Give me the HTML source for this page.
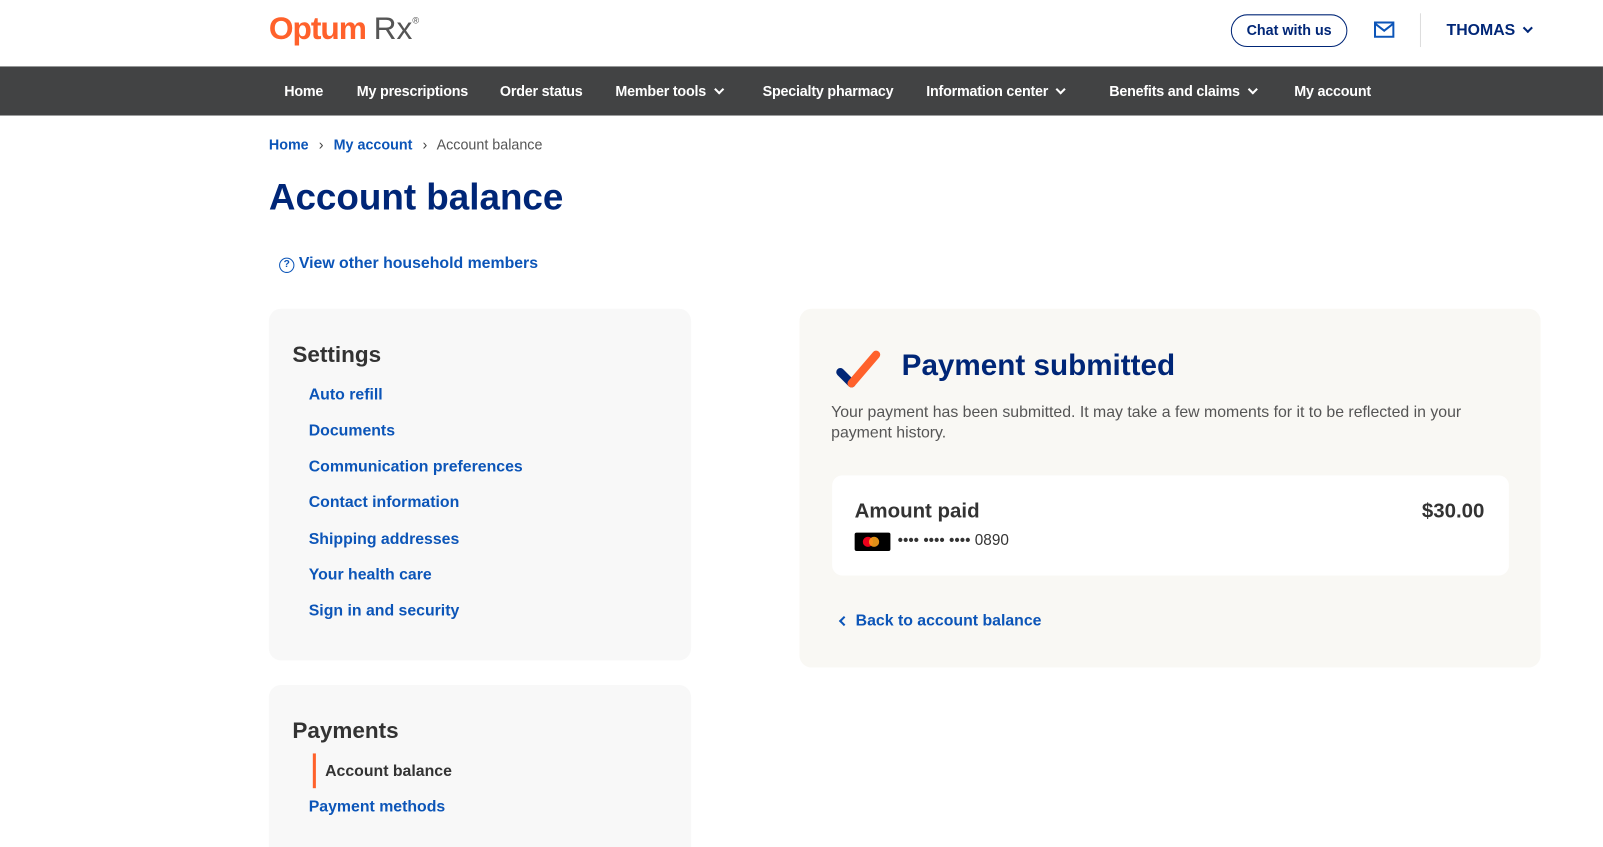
<!DOCTYPE html>
<html><head><meta charset="utf-8"><style>
*{box-sizing:border-box;margin:0;padding:0}
html{overflow:hidden;height:847px}
body{width:1603px;height:847px;overflow:hidden;background:#fff;font-family:"Liberation Sans",sans-serif;color:#333;position:relative}
#w{position:absolute;left:0;top:0;width:1568px;height:829px;overflow:hidden;transform:scale(1.0223);transform-origin:0 0}
.a{position:absolute}
a,.lk{color:#0c55b8;font-weight:bold;text-decoration:none}
.nav{top:65px;left:0;width:1568px;height:48px;background:#424344}
.nav span{position:absolute;top:16px;color:#fff;font-size:14px;font-weight:bold;white-space:nowrap;letter-spacing:-0.2px}
.chev{display:inline-block;width:7px;height:7px;border-right:2px solid currentColor;border-bottom:2px solid currentColor;transform:rotate(45deg);margin-left:9px;position:relative;top:-3px}
.card{background:#f8f8f8;border-radius:12px}
.side a{position:absolute;left:39px;font-size:15.5px}
</style></head><body><div id="w">
<div class="a" style="left:263px;top:10px;font-size:31px;font-weight:bold;color:#ff612b;letter-spacing:-1px">Optum <span style="font-weight:normal;color:#555;letter-spacing:0">Rx</span><sup style="font-size:9px;color:#555;font-weight:normal;position:relative;top:-4px">®</sup></div>
<div class="a" style="left:1204px;top:14px;width:114px;height:32px;border:1.5px solid #002677;border-radius:16px;color:#002677;font-weight:bold;font-size:14px;text-align:center;line-height:29px">Chat with us</div>
<svg class="a" style="left:1344px;top:21px" width="20" height="16" viewBox="0 0 20 16"><rect x="1" y="1" width="18" height="14" fill="none" stroke="#0c55b8" stroke-width="2"/><path d="M1 2l9 7 9-7" fill="none" stroke="#0c55b8" stroke-width="2"/></svg>
<div class="a" style="left:1389px;top:13px;width:1px;height:33px;background:#ddd"></div>
<div class="a" style="left:1415px;top:21px;font-size:15.5px;font-weight:bold;color:#002677">THOMAS<span class="chev"></span></div>
<div class="a nav">
<span style="left:278px">Home</span><span style="left:349px">My prescriptions</span><span style="left:489px">Order status</span><span style="left:602px">Member tools<i class="chev"></i></span><span style="left:746px">Specialty pharmacy</span><span style="left:906px">Information center<i class="chev"></i></span><span style="left:1085px">Benefits and claims<i class="chev"></i></span><span style="left:1266px">My account</span>
</div>
<div class="a" style="left:263px;top:133px;font-size:14px"><a>Home</a> <span style="color:#444;margin:0 6px">›</span> <a>My account</a> <span style="color:#444;margin:0 6px">›</span> <span style="color:#555">Account balance</span></div>
<div class="a" style="left:263px;top:172px;font-size:36px;font-weight:bold;color:#002677">Account balance</div>
<div class="a lk" style="left:273px;top:249px;font-size:15.5px"><span style="display:inline-block;width:15px;height:15px;border:1.5px solid #0c55b8;border-radius:50%;font-size:10px;text-align:center;line-height:12px;vertical-align:1px">?</span> View other household members</div>
<div class="a card side" style="left:263px;top:302px;width:413px;height:344px">
<div class="a" style="left:23px;top:32px;font-size:22px;font-weight:bold;color:#333">Settings</div>
<a style="top:76px">Auto refill</a><a style="top:111px">Documents</a><a style="top:146px">Communication preferences</a><a style="top:181px">Contact information</a><a style="top:217px">Shipping addresses</a><a style="top:252px">Your health care</a><a style="top:287px">Sign in and security</a>
</div>
<div class="a card side" style="left:263px;top:670px;width:413px;height:200px">
<div class="a" style="left:23px;top:32px;font-size:22px;font-weight:bold;color:#333">Payments</div>
<div class="a" style="left:43px;top:67px;width:3px;height:34px;background:#ff612b"></div>
<div class="a" style="left:55px;top:76px;font-size:15.5px;font-weight:bold;color:#333">Account balance</div>
<a style="top:111px">Payment methods</a>
</div>
<div class="a card" style="left:782px;top:302px;width:725px;height:351px;background:#f9f8f4">
<svg class="a" style="left:35px;top:38px" width="46" height="40" viewBox="0 0 46 40"><path d="M5 24l11 11" stroke="#002677" stroke-width="8" stroke-linecap="round"/><path d="M16 35L40 7" stroke="#ff612b" stroke-width="8" stroke-linecap="round"/></svg>
<div class="a" style="left:100px;top:40px;font-size:29px;font-weight:bold;color:#002677">Payment submitted</div>
<div class="a" style="left:31px;top:92px;width:680px;font-size:15.5px;line-height:20px;color:#555">Your payment has been submitted. It may take a few moments for it to be reflected in your payment history.</div>
<div class="a" style="left:32px;top:163px;width:662px;height:98px;background:#fff;border-radius:10px">
<div class="a" style="left:22px;top:24px;font-size:20px;font-weight:bold;color:#333">Amount paid</div>
<div class="a" style="right:24px;top:24px;font-size:20px;font-weight:bold;color:#333">$30.00</div>
<div class="a" style="left:22px;top:56px;width:35px;height:18px;background:#000;border-radius:2px"><span class="a" style="left:8px;top:4px;width:10px;height:10px;border-radius:50%;background:#eb001b"></span><span class="a" style="left:14px;top:4px;width:10px;height:10px;border-radius:50%;background:#f79e1b;opacity:.9"></span></div>
<div class="a" style="left:64px;top:55px;font-size:15px;color:#333">•••• •••• •••• 0890</div>
</div>
<div class="a lk" style="left:40px;top:297px;font-size:15.5px"><span style="display:inline-block;width:7px;height:7px;border-left:2px solid #0c55b8;border-bottom:2px solid #0c55b8;transform:rotate(45deg);margin-right:8px;vertical-align:1px"></span>Back to account balance</div>
</div>
</div></body></html>
